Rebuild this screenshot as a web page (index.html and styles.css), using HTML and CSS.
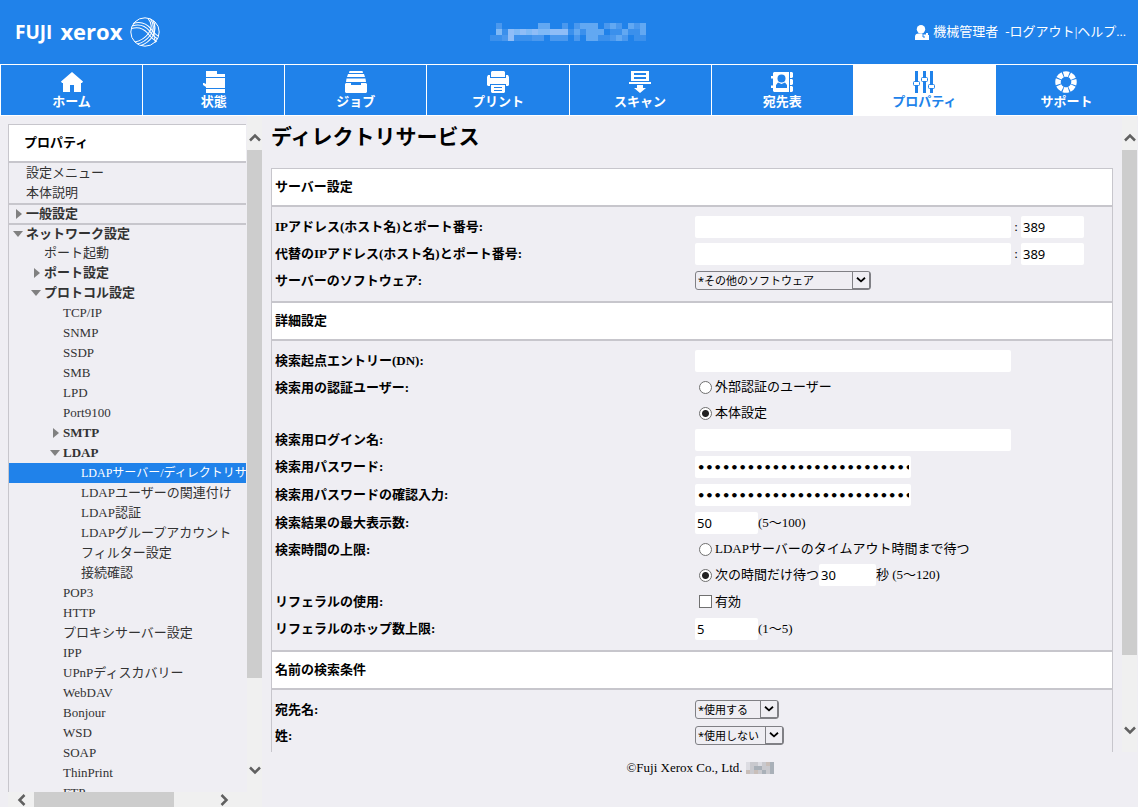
FILE: index.html
```html
<!DOCTYPE html>
<html lang="ja">
<head>
    <meta charset="UTF-8">
    <meta name="viewport" content="width=device-width, initial-scale=1.0">
    <title>ディレクトリサービス</title>
    <link rel="stylesheet" href="styles.css">
</head>
<body>
    <header class="header">
        <div class="logo">
            <span class="logo-fuji">FUJI</span>
            <span class="logo-xerox">xerox</span>
            <svg class="logo-ball" width="30" height="30" viewBox="0 0 30 30" fill="none" stroke="#fff">
                <circle cx="15" cy="15" r="14.2" stroke-width="1"/>
                <path stroke-width="1.1" d="M3 6.500C11 4 17 7 21 12C24 16 26 18 28.500 19M2 9C10 6.500 15.500 9 19.500 14C22.500 18 25 20.500 28 22M1.500 11.500C8 9.500 13.500 11.500 17.500 16C20.500 20 23.500 23 27 24.500"/>
                <path stroke-width="1.1" d="M18 1.500C22 6 22 11.500 18.500 16.500C15 21 10 24 5 25M20.500 2C24 7 24 13 20.500 18C17 22.500 12 26 7.500 27M23 3.500C26 9 25.500 14.500 22.500 19.500C19.500 24 15 27 11 28.500"/>
                <path stroke-width="1" d="M25 5.500C23.500 12 23.500 19 25.500 25.500"/>
            </svg>
        </div>
        <svg class="model-name" width="162" height="18" viewBox="0 0 27 3" preserveAspectRatio="none" shape-rendering="crispEdges">
            <g fill="#4a98ee"><path d="M1 0h1v1H1zM12 0h1v1h-1zM14 0h1v1h-1zM17 0h1v1h-1zM19 0h3v1h-3zM24 0h1v1h-1zM2 2h1v1H2zM7 2h2v1H7zM10 2h3v1h-3zM14 2h1v1h-1zM20 2h1v1h-1zM22 2h1v1h-1z"/></g>
            <g fill="#62a8f2"><path d="M8 0h2v1H8zM15 0h3v1h-3zM20 0h1v1h-1zM23 0h1v1h-1zM25 0h1v1h-1zM14 1h1v1h-1zM16 1h3v1h-3zM22 1h1v1h-1zM25 1h1v1h-1zM16 2h2v1h-2zM21 2h1v1h-1z"/></g>
            <g fill="#7fb9f6"><path d="M1 1h1v1H1zM4 1h2v1H4zM6 1h1v1H6zM8 1h2v1H8z"/></g>
            <g fill="#8fbdf7"><path d="M3 1h1v2H3zM5 1h1v1H5zM7 1h1v1H7zM10 1h3v1h-3z"/></g>
            <g fill="#3b90ec"><path d="M0 2h2v1H0zM4 2h3v1H4zM2 1h1v1H2zM13 1h1v1h-1zM15 1h1v1h-1zM20 1h2v1h-2zM23 1h2v1h-2zM18 2h2v1h-2zM24 2h2v1h-2z"/></g>
        </svg>
        <div class="account">
            <svg width="14" height="15" viewBox="0 0 14 15" fill="#fff">
                <circle cx="6" cy="4.200" r="4.200"/>
                <path d="M0 15v-3.500C0 9.500 1.500 8.700 3.500 8.500h3.500l1.500 1h2.500v-1.500h2V10h1v5z"/>
                <path d="M8 9v3h2" fill="none" stroke="#2082ea"/>
            </svg>
            <span class="user">機械管理者</span>
            <span>-<a href="#">ログアウト</a>|<a href="#">ヘルプ...</a></span>
        </div>
    </header>

    <nav class="tabs">
        <a class="tab" href="#">
            <svg width="22" height="22" viewBox="0 0 22 22"><path d="M11 1L22 10.500L21 12H20V21H13V14H9V21H2V12H1L0 10.500z"/></svg>
            <span>ホーム</span>
        </a>
        <a class="tab" href="#">
            <svg width="22" height="22" viewBox="0 0 22 22"><path d="M3 0H14V3H22V6H3zM3 7H22V17H3V16L0 14V12H1L3 13zM3 18H22V22H3z"/></svg>
            <span>状態</span>
        </a>
        <a class="tab" href="#">
            <svg width="22" height="22" viewBox="0 0 22 22"><path d="M4.500 0H17.500L18 2H4zM3 3H19L20 6H2zM1.500 7.500H20.500L21 11H1zM1 12H6V14H16V12H21L22 13V21L21 22H1L0 21V13z"/></svg>
            <span>ジョブ</span>
        </a>
        <a class="tab" href="#">
            <svg width="22" height="22" viewBox="0 0 22 22"><path d="M5 0H17L18 1V6H4V1zM1 4H3V7H19V4H21L22 6V14L21 15H19V13H3V15H1L0 14V6z"/><path fill-rule="evenodd" d="M4 14H18V21L17 22H5L4 21zM7 16V17H15V16zM7 19V20H15V19z"/></svg>
            <span>プリント</span>
        </a>
        <a class="tab" href="#">
            <svg width="22" height="22" viewBox="0 0 22 22"><path fill-rule="evenodd" d="M2 0H20V10H2zM5 2V4H17V2zM5 6V8H17V6z"/><path d="M0 11H22V13H0zM8 14H14V17H17L11 22L5 17H8z"/></svg>
            <span>スキャン</span>
        </a>
        <a class="tab" href="#">
            <svg width="22" height="22" viewBox="0 0 22 22"><path d="M3 1H18V21H3L2 20V17H0V14.500H2V7.500H0V5H2V2zM19 1H21L22 2V6L21 7H19zM19 8H21L22 9V13L21 14H19zM19 15H21L22 16V20L21 21H19z"/><g class="cut"><circle cx="10.500" cy="7.500" r="4"/><path d="M5 17V14L7 11.500L10.500 13L14 11.500L16 14V17z"/></g></svg>
            <span>宛先表</span>
        </a>
        <a class="tab active" href="#" aria-current="page">
            <svg width="22" height="22" viewBox="0 0 22 22"><path d="M2 0H5V22H2zM10 0H13V22H10zM17 0H20V22H17z"/><g fill="#fff" stroke="#2082ea" stroke-width="1"><rect x="0.500" y="10.500" width="6" height="4" rx="1"/><rect x="8.500" y="6.500" width="6" height="4" rx="1"/><rect x="15.500" y="13.500" width="6" height="4" rx="1"/></g></svg>
            <span>プロパティ</span>
        </a>
        <a class="tab" href="#">
            <svg width="22" height="22" viewBox="0 0 22 22"><circle cx="11" cy="11" r="8" fill="none" stroke="#fff" stroke-width="5.500" stroke-dasharray="5.300 0.983" stroke-dashoffset="2.650"/></svg>
            <span>サポート</span>
        </a>
    </nav>

    <div class="page">
        <aside class="sidebar">
            <div class="sidebar-top">
                <div class="tree-box">
                    <h2 class="tree-title">プロパティ</h2>
                    <ul class="tree">
                        <li><a href="#">設定メニュー</a></li>
                        <li><a href="#">本体説明</a></li>
                        <li class="branch ruled"><a href="#"><span class="closed"></span>一般設定</a></li>
                        <li class="branch ruled"><a href="#"><span class="open"></span>ネットワーク設定</a></li>
                        <li class="level-2"><a href="#">ポート起動</a></li>
                        <li class="level-2 branch"><a href="#"><span class="closed"></span>ポート設定</a></li>
                        <li class="level-2 branch"><a href="#"><span class="open"></span>プロトコル設定</a></li>
                        <li class="level-3"><a href="#">TCP/IP</a></li>
                        <li class="level-3"><a href="#">SNMP</a></li>
                        <li class="level-3"><a href="#">SSDP</a></li>
                        <li class="level-3"><a href="#">SMB</a></li>
                        <li class="level-3"><a href="#">LPD</a></li>
                        <li class="level-3"><a href="#">Port9100</a></li>
                        <li class="level-3 branch"><a href="#"><span class="closed"></span>SMTP</a></li>
                        <li class="level-3 branch"><a href="#"><span class="open"></span>LDAP</a></li>
                        <li class="level-4 selected"><a href="#">LDAPサーバー/ディレクトリサ</a></li>
                        <li class="level-4"><a href="#">LDAPユーザーの関連付け</a></li>
                        <li class="level-4"><a href="#">LDAP認証</a></li>
                        <li class="level-4"><a href="#">LDAPグループアカウント</a></li>
                        <li class="level-4"><a href="#">フィルター設定</a></li>
                        <li class="level-4"><a href="#">接続確認</a></li>
                        <li class="level-3"><a href="#">POP3</a></li>
                        <li class="level-3"><a href="#">HTTP</a></li>
                        <li class="level-3"><a href="#">プロキシサーバー設定</a></li>
                        <li class="level-3"><a href="#">IPP</a></li>
                        <li class="level-3"><a href="#">UPnPディスカバリー</a></li>
                        <li class="level-3"><a href="#">WebDAV</a></li>
                        <li class="level-3"><a href="#">Bonjour</a></li>
                        <li class="level-3"><a href="#">WSD</a></li>
                        <li class="level-3"><a href="#">SOAP</a></li>
                        <li class="level-3"><a href="#">ThinPrint</a></li>
                        <li class="level-3"><a href="#">FTP</a></li>
                    </ul>
                </div>
                <div class="scroll-v">
                    <button class="scroll-btn" type="button" aria-label="上へ"><svg width="12" height="9" viewBox="0 0 12 9"><path d="M1 7.500L6 2.500L11 7.500"/></svg></button>
                    <div class="track"><div class="thumb thumb-tree"></div></div>
                    <button class="scroll-btn" type="button" aria-label="下へ"><svg width="12" height="9" viewBox="0 0 12 9"><path d="M1 1.500L6 6.500L11 1.500"/></svg></button>
                </div>
            </div>
            <div class="scroll-h">
                <button class="scroll-btn" type="button" aria-label="左へ"><svg width="9" height="12" viewBox="0 0 9 12"><path d="M7.500 1L2.500 6L7.500 11"/></svg></button>
                <div class="track"><div class="thumb"></div></div>
                <button class="scroll-btn" type="button" aria-label="右へ"><svg width="9" height="12" viewBox="0 0 9 12"><path d="M1.500 1L6.500 6L1.500 11"/></svg></button>
            </div>
        </aside>

        <main class="main">
            <div class="main-top">
                <form class="content">
                    <h1>ディレクトリサービス</h1>
                    <div class="panel">
                        <h3>サーバー設定</h3>
                        <div class="section">
                            <div class="row">
                                <label class="name" for="host">IPアドレス(ホスト名)とポート番号:</label>
                                <div class="value"><input class="text wide" id="host" type="text"><span class="colon">:</span><input class="text short" type="text" value="389" aria-label="ポート番号"></div>
                            </div>
                            <div class="row">
                                <label class="name" for="alt-host">代替のIPアドレス(ホスト名)とポート番号:</label>
                                <div class="value"><input class="text wide" id="alt-host" type="text"><span class="colon">:</span><input class="text short" type="text" value="389" aria-label="代替のポート番号"></div>
                            </div>
                            <div class="row select-row">
                                <label class="name" for="software">サーバーのソフトウェア:</label>
                                <div class="value">
                                    <span class="select select-l"><select id="software"><option>*その他のソフトウェア</option></select><svg width="18" height="17" viewBox="0 0 18 17"><path d="M4.500 6L9 10L13.500 6"/></svg></span>
                                </div>
                            </div>
                        </div>

                        <h3>詳細設定</h3>
                        <div class="section">
                            <div class="row">
                                <label class="name" for="base-dn">検索起点エントリー(DN):</label>
                                <div class="value"><input class="text wide" id="base-dn" type="text"></div>
                            </div>
                            <div class="row" role="radiogroup" aria-labelledby="auth-user">
                                <span class="name" id="auth-user">検索用の認証ユーザー:</span>
                                <div>
                                    <div class="choice"><input type="radio" name="auth" id="auth-ext"><label for="auth-ext">外部認証のユーザー</label></div>
                                    <div class="choice"><input type="radio" name="auth" id="auth-own" checked><label for="auth-own">本体設定</label></div>
                                </div>
                            </div>
                            <div class="row">
                                <label class="name" for="login">検索用ログイン名:</label>
                                <div class="value"><input class="text wide" id="login" type="text"></div>
                            </div>
                            <div class="row password-row">
                                <label class="name" for="password">検索用パスワード:</label>
                                <div class="value"><input class="text password" id="password" type="password" value="00000000000000000000000000000000"></div>
                            </div>
                            <div class="row password-row">
                                <label class="name" for="password-again">検索用パスワードの確認入力:</label>
                                <div class="value"><input class="text password" id="password-again" type="password" value="00000000000000000000000000000000"></div>
                            </div>
                            <div class="row">
                                <label class="name" for="max-results">検索結果の最大表示数:</label>
                                <div class="value"><input class="text short" id="max-results" type="text" value="50"><span>(5〜100)</span></div>
                            </div>
                            <div class="row" role="radiogroup" aria-labelledby="time-limit">
                                <span class="name" id="time-limit">検索時間の上限:</span>
                                <div>
                                    <div class="choice"><input type="radio" name="limit" id="limit-server"><label for="limit-server">LDAPサーバーのタイムアウト時間まで待つ</label></div>
                                    <div class="choice"><input type="radio" name="limit" id="limit-own" checked><label for="limit-own">次の時間だけ待つ</label><input class="text seconds" type="text" value="30" aria-label="秒数"><span>秒 (5〜120)</span></div>
                                </div>
                            </div>
                            <div class="row">
                                <span class="name">リフェラルの使用:</span>
                                <div class="choice"><input type="checkbox" id="referral"><label for="referral">有効</label></div>
                            </div>
                            <div class="row">
                                <label class="name" for="hops">リフェラルのホップ数上限:</label>
                                <div class="value"><input class="text short" id="hops" type="text" value="5"><span>(1〜5)</span></div>
                            </div>
                        </div>

                        <h3>名前の検索条件</h3>
                        <div class="section">
                            <div class="row select-row">
                                <label class="name" for="recipient">宛先名:</label>
                                <div class="value">
                                    <span class="select select-s"><select id="recipient"><option>*使用する</option></select><svg width="18" height="17" viewBox="0 0 18 17"><path d="M4.500 6L9 10L13.500 6"/></svg></span>
                                </div>
                            </div>
                            <div class="row select-row">
                                <label class="name" for="surname">姓:</label>
                                <div class="value">
                                    <span class="select select-m"><select id="surname"><option>*使用しない</option></select><svg width="18" height="17" viewBox="0 0 18 17"><path d="M4.500 6L9 10L13.500 6"/></svg></span>
                                </div>
                            </div>
                            <div class="row select-row">
                                <span class="name"></span>
                                <div class="value">
                                    <span class="select select-m"><select aria-label="名"><option></option></select></span>
                                </div>
                            </div>
                        </div>
                    </div>
                </form>
                <div class="scroll-v">
                    <button class="scroll-btn" type="button" aria-label="上へ"><svg width="12" height="9" viewBox="0 0 12 9"><path d="M1 7.500L6 2.500L11 7.500"/></svg></button>
                    <div class="track"><div class="thumb thumb-main"></div></div>
                    <button class="scroll-btn" type="button" aria-label="下へ"><svg width="12" height="9" viewBox="0 0 12 9"><path d="M1 1.500L6 6.500L11 1.500"/></svg></button>
                </div>
            </div>
            <footer class="footer">
                <span>©Fuji Xerox Co., Ltd.</span>
                <svg width="28" height="12" viewBox="0 0 28 12" shape-rendering="crispEdges">
                    <path fill="#c9c9ce" d="M0 0H28V12H0z"/>
                    <path fill="#dcdce2" d="M0 0H4V4H0zM12 0H16V4H12zM0 4H4V8H0z"/>
                    <path fill="#a9b0b8" d="M8 4H16V8H8zM24 0H28V12H24zM16 8H20V12H16z"/>
                    <path fill="#c8beb9" d="M0 8H4V12H0zM8 8H12V12H8zM20 0H24V4H20z"/>
                </svg>
            </footer>
        </main>
    </div>
</body>
</html>
```
FILE: styles.css
```css
* {
    box-sizing: border-box;
}
body {
    display: flex;
    flex-direction: column;
    height: 100vh;
    margin: 0;
    overflow: hidden;
    background: #efeef3;
    color: #000;
    font-family: "Liberation Serif", "Noto Sans CJK JP", serif;
    font-size: 13px;
    line-height: 20px;
}
a {
    color: inherit;
    text-decoration: none;
}
svg {
    display: block;
    flex: none;
}

/* header */
.header {
    display: grid;
    grid-template-columns: 1fr auto 1fr;
    align-items: center;
    flex: none;
    height: 64px;
    padding: 0 12px 0 15px;
    background: #2082ea;
    color: #fff;
}
.logo {
    display: flex;
    align-items: center;
    font-family: "Open Sans", sans-serif;
    font-weight: 700;
    line-height: 30px;
}
.logo-fuji {
    font-size: 19px;
}
.logo-xerox {
    margin-left: 8px;
    padding-bottom: 3px;
    font-size: 22px;
}
.logo-ball {
    margin-left: 8px;
}
.account {
    display: flex;
    align-items: center;
    justify-content: flex-end;
}
.user {
    margin: 0 7px 0 4px;
}

/* main tabs */
.tabs {
    display: grid;
    grid-template-columns: repeat(8, 1fr);
    gap: 1px;
    flex: none;
    padding: 1px;
    background: #fff;
}
.tab {
    display: flex;
    flex-direction: column;
    align-items: center;
    height: 50px;
    padding-top: 6px;
    background: #2082ea;
    color: #fff;
    font-weight: 700;
    line-height: 18px;
    fill: #fff;
}
.tab.active {
    background: #fff;
    color: #2082ea;
    fill: #2082ea;
}
.cut {
    fill: #2082ea;
}

/* page frame */
.page {
    display: flex;
    flex: 1;
    min-height: 0;
}
.sidebar {
    display: flex;
    flex-direction: column;
    flex: none;
    width: 254px;
    margin-left: 8px;
}
.sidebar-top,
.main-top {
    display: flex;
    flex: 1;
    min-height: 0;
}
.main {
    display: flex;
    flex-direction: column;
    flex: 1;
    min-width: 0;
}

/* tree menu */
.tree-box {
    flex: 1;
    min-width: 0;
    margin: 8px 1px 0 0;
    border: 1px solid #c7c6cc;
    border-width: 1px 0 0 1px;
    overflow: hidden;
    color: #333;
}
.tree-title {
    margin: 0;
    padding-left: 15px;
    border-bottom: 2px solid #c7c6cc;
    background: #fff;
    color: #000;
    font-size: 13px;
    line-height: 36px;
}
.tree {
    margin: 0;
    padding: 0;
    list-style: none;
}
.tree li {
    height: 20px;
    padding-left: 17px;
    white-space: nowrap;
}
.tree a {
    display: flex;
    align-items: center;
}
.tree .ruled {
    border-top: 2px solid #c7c6cc;
    line-height: 18px;
}
.tree .branch {
    font-weight: 700;
}
.tree .level-2 {
    padding-left: 35px;
}
.tree .level-3 {
    padding-left: 54px;
}
.tree .level-4 {
    padding-left: 72px;
}
.tree .selected {
    background: #2082ea;
    color: #fff;
    font-size: 12px;
}
.closed {
    width: 6px;
    margin: 0 4px 0 -10px;
    border: 5px solid transparent;
    border-width: 5px 0 5px 6px;
    border-left-color: #808080;
}
.open {
    width: 10px;
    margin: 0 3px 0 -13px;
    border: 5px solid transparent;
    border-width: 6px 5px 0;
    border-top-color: #808080;
}

/* scroll bars */
.scroll-v,
.scroll-h {
    display: flex;
    flex: none;
    background: #f0f0f0;
}
.scroll-v {
    flex-direction: column;
    width: 15px;
    padding: 8px 0 9px;
}
.scroll-h {
    height: 15px;
    padding-right: 25px;
}
.scroll-btn {
    display: flex;
    align-items: center;
    justify-content: center;
    flex: 0 0 26px;
    padding: 0;
    border: 0;
    background: none;
    fill: none;
    stroke: #606060;
    stroke-width: 2.5px;
}
.track {
    flex: 1;
}
.thumb {
    width: 79%;
    height: 100%;
    background: #cdcdcd;
}
.thumb-tree {
    width: 100%;
    height: 87%;
}
.thumb-main {
    width: 100%;
    height: 89%;
}

/* settings form */
.content {
    flex: 1;
    min-width: 0;
    margin: 0 9px;
    overflow: hidden;
}
.main .scroll-v {
    margin-right: 1px;
}
h1 {
    margin: 0;
    padding-bottom: 10px;
    font-size: 21px;
    line-height: 42px;
}
.panel {
    border: 1px solid #c7c6cc;
}
h3 {
    margin: 0;
    padding-left: 3px;
    border: 2px solid #c7c6cc;
    border-width: 2px 0;
    background: #fff;
    font-size: 13px;
    line-height: 36px;
}
h3:first-child {
    border-top: 0;
}
.section {
    padding: 6px 0 8px;
}
.row {
    display: grid;
    grid-template-columns: 1fr 1fr;
    grid-auto-rows: minmax(27px, auto);
}
.select-row {
    grid-auto-rows: 26px;
}
.password-row {
    grid-auto-rows: 28px;
}
.name {
    padding-left: 3px;
    font-weight: 700;
    line-height: 27px;
}
.value,
.choice {
    display: flex;
    align-items: center;
    padding-left: 3px;
}
.choice {
    min-height: 26px;
    padding-left: 7px;
}
.choice label {
    margin-left: 3px;
}
.text {
    height: 22px;
    padding: 0 2px;
    border: 0;
    border-radius: 2px;
    background: #fff;
    color: #000;
    font-family: "Noto Sans", sans-serif;
    font-size: 13px;
}
.wide {
    width: 316px;
}
.short {
    width: 63px;
}
.seconds {
    width: 57px;
}
.password {
    width: 216px;
    font-family: "DejaVu Sans", sans-serif;
    font-weight: 700;
}
.colon {
    width: 10px;
    text-align: center;
}
input[type="radio"],
input[type="checkbox"] {
    width: 13px;
    height: 13px;
    margin: 0;
    border: 1px solid #707070;
    background: #fff;
    appearance: none;
}
input[type="radio"] {
    border-radius: 50%;
}
input[type="radio"]:checked {
    background: radial-gradient(circle, #222 3px, #fff 4px);
}
.select {
    position: relative;
    height: 19px;
}
.select-l {
    width: 176px;
}
.select-m {
    width: 89px;
}
.select-s {
    width: 84px;
}
.select select {
    display: block;
    width: 100%;
    height: 100%;
    padding: 0 0 0 2px;
    border: 1px solid #808085;
    border-radius: 3px;
    background: #efeef3;
    color: #000;
    font-family: "Noto Sans", "Noto Sans CJK JP", sans-serif;
    font-size: 11px;
    appearance: none;
}
.select svg {
    position: absolute;
    top: 1px;
    right: 1px;
    border: 1px solid #808085;
    border-width: 0 1px 1px 1px;
    fill: none;
    stroke: #000;
    stroke-width: 2px;
    pointer-events: none;
}

.footer {
    display: flex;
    align-items: center;
    justify-content: center;
    gap: 3px;
    height: 55px;
    padding-bottom: 24px;
}
```
